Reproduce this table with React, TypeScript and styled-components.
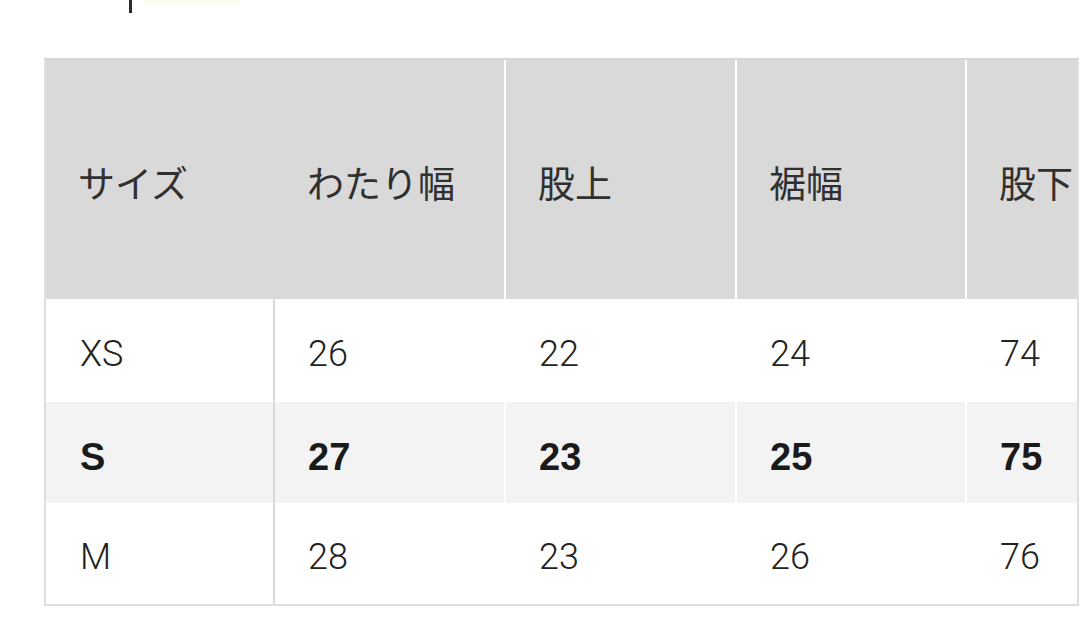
import React from "react";
import styled, { createGlobalStyle } from "styled-components";

const Global = createGlobalStyle`
  html, body { margin: 0; padding: 0; background: #ffffff; }
  body { width: 1080px; height: 637px; overflow: hidden; }
`;

const Page = styled.div`
  width: 1080px;
  height: 637px;
  display: flex;
  flex-direction: column;
  padding-left: 44px;
  box-sizing: border-box;
`;

const TopStrip = styled.div`
  height: 58px;
  display: flex;
  align-items: flex-start;
  gap: 12px;
  padding-left: 85px;
  box-sizing: border-box;
`;

const Caret = styled.div`
  width: 3px;
  height: 13px;
  background: #2a2a2a;
`;

const Highlight = styled.div`
  width: 95px;
  height: 5px;
  background: #fdfcf1;
`;

const Table = styled.table`
  border-collapse: separate;
  border-spacing: 0;
  border: 2px solid #dedede;
  border-top: 2px solid #d5d5d5;
  table-layout: fixed;
  width: 1035px;
  font-family: Roboto, "Noto Sans CJK JP", sans-serif;
`;

const Col = styled.col<{ $w: number }>`
  width: ${(p) => p.$w}px;
`;

const HeadCell = styled.th<{ $first?: boolean }>`
  height: 239px;
  padding: 4px 0 0 32px;
  box-sizing: border-box;
  background: #d9d9d9;
  border-right: 2px solid ${(p) => (p.$first ? "#d9d9d9" : "#ffffff")};
  text-align: left;
  vertical-align: middle;
  font-family: "Noto Sans CJK JP", sans-serif;
  font-weight: 400;
  font-size: 37px;
  color: #303030;
  white-space: nowrap;
  overflow: hidden;
  &:last-child { border-right: none; }
`;

const Row = styled.tr<{ $shade?: boolean }>`
  background: ${(p) => (p.$shade ? "#f3f3f3" : "#ffffff")};
`;

const Cell = styled.td<{ $first?: boolean; $bold?: boolean; $h: number }>`
  height: ${(p) => p.$h}px;
  padding: ${(p) => (p.$bold ? 10 : 6)}px 0 0 ${(p) => (p.$first ? 34 : 33)}px;
  box-sizing: border-box;
  border-right: 2px solid ${(p) => (p.$first ? "#d9d9d9" : "#ffffff")};
  text-align: left;
  vertical-align: middle;
  font-family: ${(p) => (p.$bold ? '"Liberation Sans", Arial' : "Roboto")}, sans-serif;
  font-weight: ${(p) => (p.$bold ? 700 : 300)};
  font-size: ${(p) => (p.$bold ? 38 : 36)}px;
  color: ${(p) => (p.$bold ? "#1a1a1a" : "#222222")};
  white-space: nowrap;
  overflow: hidden;
  &:last-child { border-right: none; }
`;

const headers = ["サイズ", "わたり幅", "股上", "裾幅", "股下"];
const rows = [
  { size: "XS", values: ["26", "22", "24", "74"], bold: false, shade: false, h: 103 },
  { size: "S", values: ["27", "23", "25", "75"], bold: true, shade: true, h: 101 },
  { size: "M", values: ["28", "23", "26", "76"], bold: false, shade: false, h: 101 },
];

export default function App() {
  return (
    <>
      <Global />
      <Page>
        <TopStrip>
          <Caret />
          <Highlight />
        </TopStrip>
        <Table>
          <colgroup>
            <Col $w={229} />
            <Col $w={231} />
            <Col $w={231} />
            <Col $w={230} />
            <Col $w={110} />
          </colgroup>
          <thead>
            <tr>
              {headers.map((h, i) => (
                <HeadCell key={h} $first={i === 0}>
                  {h}
                </HeadCell>
              ))}
            </tr>
          </thead>
          <tbody>
            {rows.map((r) => (
              <Row key={r.size} $shade={r.shade}>
                <Cell $first $bold={r.bold} $h={r.h}>
                  {r.size}
                </Cell>
                {r.values.map((v, i) => (
                  <Cell key={i} $bold={r.bold} $h={r.h}>
                    {v}
                  </Cell>
                ))}
              </Row>
            ))}
          </tbody>
        </Table>
      </Page>
    </>
  );
}
